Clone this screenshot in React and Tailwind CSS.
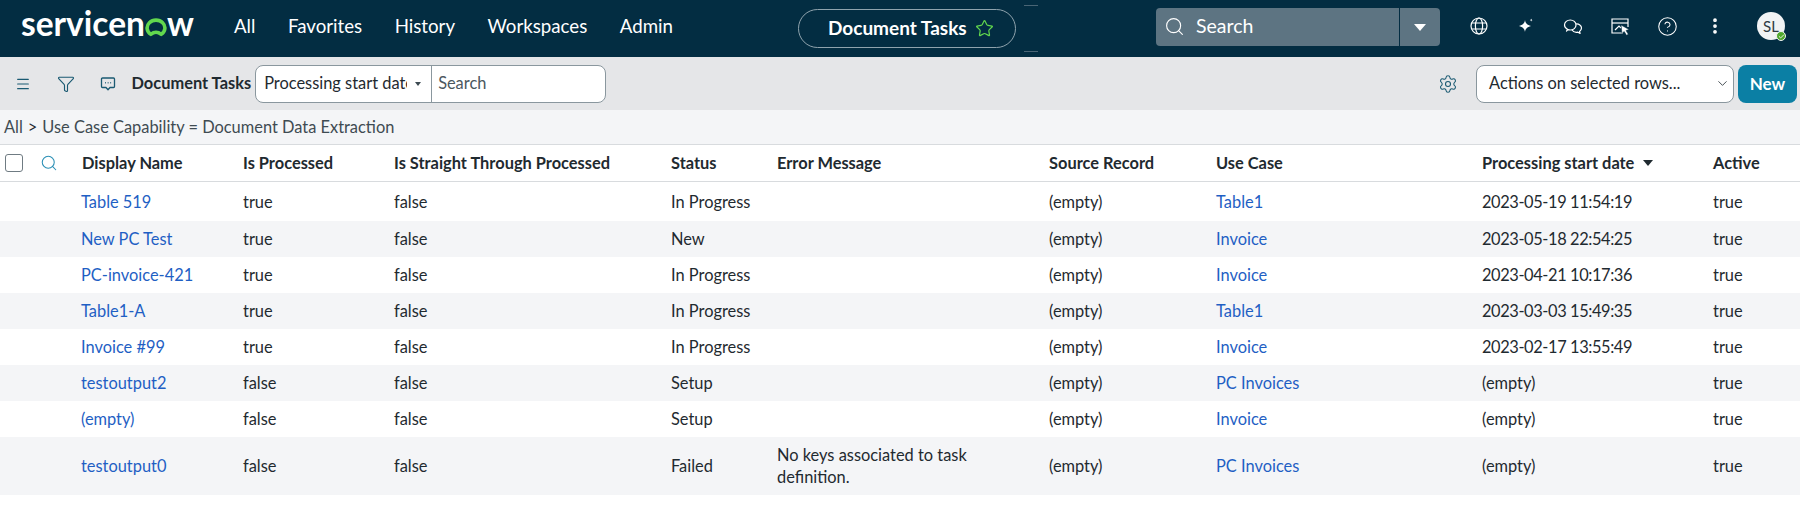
import React from "react";
import { Search, Star, CircleHelp, EllipsisVertical, Settings, Funnel, Menu, ChevronDown, Check } from "lucide-react";

const rows = [
  { name: "Table 519", processed: "true", status: "In Progress", useCase: "Table1", date: "2023-05-19 11:54:19" },
  { name: "New PC Test", processed: "true", status: "New", useCase: "Invoice", date: "2023-05-18 22:54:25" },
  { name: "PC-invoice-421", processed: "true", status: "In Progress", useCase: "Invoice", date: "2023-04-21 10:17:36" },
  { name: "Table1-A", processed: "true", status: "In Progress", useCase: "Table1", date: "2023-03-03 15:49:35" },
  { name: "Invoice #99", processed: "true", status: "In Progress", useCase: "Invoice", date: "2023-02-17 13:55:49" },
  { name: "testoutput2", processed: "false", status: "Setup", useCase: "PC Invoices", date: "(empty)" },
  { name: "(empty)", processed: "false", status: "Setup", useCase: "Invoice", date: "(empty)" },
  { name: "testoutput0", processed: "false", status: "Failed", error: "No keys associated to task definition.", useCase: "PC Invoices", date: "(empty)" },
];

const gridCols = "grid grid-cols-[82px_161px_151px_277px_106px_272px_167px_266px_231px_87px] items-center";

function GlobeIcon() {
  return (
    <svg width="20" height="20" viewBox="0 0 20 20" fill="none" stroke="white" strokeWidth="1.200">
      <circle cx="10" cy="10" r="8" />
      <ellipse cx="10" cy="10" rx="3.600" ry="8" />
      <path d="M2.800 7h14.400M2.800 13h14.400" />
    </svg>
  );
}

function Sparkle() {
  return (
    <svg width="20" height="20" viewBox="0 0 20 20" fill="white">
      <path d="M9 4c.5 3.300 2 5 6 6-4 1-5.500 2.700-6 6-.5-3.300-2-5-6-6 4-1 5.500-2.700 6-6z" />
      <path d="M15.200 2.500c.2 1 .5 1.400 1.500 1.600-1 .2-1.300.6-1.500 1.600-.2-1-.5-1.400-1.500-1.600 1-.2 1.300-.6 1.500-1.600z" />
    </svg>
  );
}

function ChatsIcon() {
  return (
    <svg width="20" height="20" viewBox="0 0 20 20" fill="none" stroke="white" strokeWidth="1.200" strokeLinejoin="round">
      <path d="M4.500 13.200C2.700 12.300 1.500 10.800 1.500 9c0-2.900 2.700-5 5.800-5s5.700 2.100 5.700 5-2.600 5-5.700 5c-.8 0-1.500-.1-2.200-.4L3.500 15z" />
      <path d="M13 8c2.900-.3 5.500 1.400 5.500 4 0 1.400-.8 2.600-2 3.400l.6 2-2.200-1.200c-2.500.5-5-.6-6-2.400" />
    </svg>
  );
}

function ChartCursor() {
  return (
    <svg width="20" height="20" viewBox="0 0 20 20" fill="none" stroke="white" strokeWidth="1.200">
      <path d="M13 17H2V3h16v8" />
      <path d="M2 7h16" />
      <path d="M5 14l4-4 2 2" />
      <path d="M11 9l8 4.500-3 1 2.300 3.800-1.800 1-2.300-3.800-2.200 2z" fill="white" stroke="#032d42" strokeWidth="0.500" />
    </svg>
  );
}

function CommentDots() {
  return (
    <svg width="16" height="16" viewBox="0 0 16 16" fill="none" stroke="currentColor" strokeWidth="1.300" strokeLinejoin="round">
      <path d="M2.500 2h11a1 1 0 0 1 1 1v7.500a1 1 0 0 1-1 1H10l-2 2.300-2-2.300H2.500a1 1 0 0 1-1-1V3a1 1 0 0 1 1-1z" />
      <path d="M5 6.800h.8M7.700 6.800h.8M10.300 6.800h.8" strokeWidth="1.500" />
    </svg>
  );
}

function Logo() {
  return (
    <div className="flex items-center -mt-[10px] text-white font-bold text-[33.500px] leading-none">
      <span>servicen</span>
      <svg width="22" height="20" viewBox="0 0 21 19" className="mt-[7px]" fill="none">
        <path d="M5.500 16.500A8.500 7.500 0 1 1 15.500 16.500Q13 14.500 10.500 14.500Q8 14.500 5.500 16.500Z" stroke="#62d84e" strokeWidth="3.400" strokeLinejoin="round" />
      </svg>
      <span>w</span>
    </div>
  );
}

export default function App() {
  return (
    <div className="w-[1800px] h-[506px] overflow-hidden bg-white font-['Lato',sans-serif] text-[16.4px] text-[#1f2a30]">
      {/* Top nav */}
      <div className="flex items-center h-[57px] bg-[#032d42] text-white">
        <div className="w-[234px] pl-[21px]">
          <Logo />
        </div>
        <nav className="flex items-center gap-[32.500px] text-[18.700px] w-[564px] -mt-[5px]">
          <span>All</span>
          <span>Favorites</span>
          <span>History</span>
          <span>Workspaces</span>
          <span>Admin</span>
        </nav>
        <div className="flex items-center gap-[8px] w-[218px] h-[39px] pl-[29px] border border-[#8fa3ad] rounded-full font-bold text-[19px]">
          <span>Document Tasks</span>
          <Star size={19} strokeWidth={1.500} className="text-[#62d84e]" />
        </div>
        <div className="flex flex-col justify-between w-[14px] h-[47px] ml-[8px]">
          <div className="h-px bg-[#4a6575]" />
          <div className="h-px bg-[#4a6575]" />
        </div>
        <div className="flex items-center w-[284px] h-[38px] -mt-[3px] ml-[118px] bg-[#5d7482] rounded">
          <Search size={21} strokeWidth={1.300} className="ml-[8px] mr-[11px] -mt-[2px]" />
          <span className="flex-1 -mt-[3px] text-[19.500px] text-white">Search</span>
          <div className="flex items-center justify-center w-[41px] h-full border-l border-[#032d42]">
            <div className="w-0 h-0 border-x-[6px] border-x-transparent border-t-[7px] border-t-white" />
          </div>
        </div>
        <div className="flex items-center ml-[29px] gap-[27px] -mt-[5px]">
          <GlobeIcon />
          <Sparkle />
          <ChatsIcon />
          <ChartCursor />
          <CircleHelp size={21} strokeWidth={1.200} />
          <EllipsisVertical size={20} strokeWidth={2.500} />
        </div>
        <div className="relative flex items-center justify-center w-[28px] h-[28px] -mt-[5px] ml-[32px] rounded-full bg-[#f1f3f4] text-[#2d3a42] text-[15px]">
          SL
          <span className="absolute -right-[1px] -bottom-[1px] flex items-center justify-center w-[10px] h-[10px] rounded-full bg-[#4fa82c] border border-[#f1f3f4]">
            <Check size={7} strokeWidth={3} className="text-white" />
          </span>
        </div>
      </div>

      {/* List toolbar */}
      <div className="flex items-center h-[53px] bg-[#e5e6e8] pr-[3px] text-[#1a5a72]">
        <Menu size={16} strokeWidth={1.800} className="ml-[15px]" />
        <Funnel size={18} strokeWidth={1.500} className="ml-[25.500px]" />
        <div className="ml-[25px]">
          <CommentDots />
        </div>
        <span className="ml-[16px] font-bold text-[#1f2a30]">Document Tasks</span>
        <div className="flex items-center h-[38px] w-[351px] ml-[4px] bg-white border border-[#8a979e] rounded-lg text-[#1f2a30]">
          <div className="flex items-center w-[176px] h-full border-r border-[#8a979e] pl-[8px]">
            <span className="w-[143px] overflow-hidden whitespace-nowrap">Processing start date</span>
            <div className="ml-[8px] w-0 h-0 border-x-[3px] border-x-transparent border-t-[4px] border-t-[#3d4a52]" />
          </div>
          <span className="pl-[6px] text-[#4b575e]">Search</span>
        </div>
        <Settings size={20} strokeWidth={1.300} className="ml-auto mr-[18px]" />
        <div className="flex items-center justify-between w-[258px] h-[38px] bg-white border border-[#8a979e] rounded-lg pl-[12px] pr-[3px] text-[#1f2a30]">
          <span>Actions on selected rows...</span>
          <ChevronDown size={15} strokeWidth={1.300} />
        </div>
        <div className="flex items-center justify-center w-[59px] h-[38px] ml-[4px] rounded-lg bg-[#0b7fa4] text-white font-bold text-[17px]">New</div>
      </div>

      {/* Breadcrumb */}
      <div className="flex items-center h-[34px] bg-[#f4f5f7] pl-[4px] text-[#3f4b52]">
        <span>All</span>
        <span className="mx-[5px] text-[#1f2a30]">&gt;</span>
        <span>Use Case Capability = Document Data Extraction</span>
      </div>

      {/* Table head */}
      <div className={`${gridCols} h-[38px] border-y border-[#d8dbde] font-bold`}>
        <div className="flex items-center">
          <span className="ml-[5px] w-[18px] h-[18px] bg-white border border-[#6f7b82] rounded-[3px]" />
          <Search size={18} strokeWidth={1.400} className="ml-[17px] text-[#2a8fb5]" />
        </div>
        <div>Display Name</div>
        <div>Is Processed</div>
        <div>Is Straight Through Processed</div>
        <div>Status</div>
        <div>Error Message</div>
        <div>Source Record</div>
        <div>Use Case</div>
        <div className="flex items-center gap-[9px]">
          Processing start date
          <div className="w-0 h-0 border-x-[5px] border-x-transparent border-t-[6px] border-t-[#1f2a30]" />
        </div>
        <div>Active</div>
      </div>

      {/* Table rows */}
      {rows.map((row, i) => (
        <div
          key={row.name}
          className={`${gridCols} ${row.error ? "h-[58px]" : i === 0 ? "h-[39px] pt-[2px]" : "h-[36px]"} ${i % 2 === 1 ? "bg-[#f4f5f7]" : "bg-white"}`}
        >
          <div />
          <div className="-ml-px text-[#1f5fc4]">{row.name}</div>
          <div>{row.processed}</div>
          <div>false</div>
          <div>{row.status}</div>
          <div className="pr-[30px] leading-[22px]">{row.error}</div>
          <div>(empty)</div>
          <div className="text-[#1f5fc4]">{row.useCase}</div>
          <div className={row.date === "(empty)" ? "" : "tracking-[-0.4px]"}>{row.date}</div>
          <div>true</div>
        </div>
      ))}
    </div>
  );
}
